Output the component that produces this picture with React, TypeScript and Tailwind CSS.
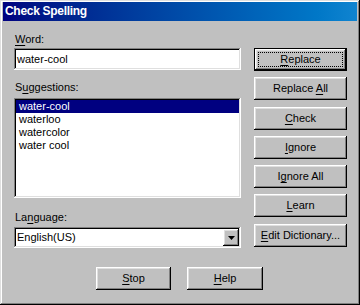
import React from 'react';

const raised =
  'shadow-[inset_-1px_-1px_#000,inset_1px_1px_#fff,inset_-2px_-2px_#808080,inset_2px_2px_#dfdfdf]';
const sunken =
  'shadow-[inset_-1px_-1px_#fff,inset_1px_1px_#808080,inset_-2px_-2px_#dfdfdf,inset_2px_2px_#000]';

function Key({ children }: { children: React.ReactNode }) {
  return <span className="underline decoration-1 underline-offset-[2px]">{children}</span>;
}

function Button({
  children,
  className = '',
  isDefault = false,
}: {
  children: React.ReactNode;
  className?: string;
  isDefault?: boolean;
}) {
  if (isDefault) {
    return (
      <div className={`h-[23px] border border-black bg-[#c0c0c0] ${className}`}>
        <div className={`h-full w-full p-[3px] ${raised}`}>
          <div className="h-full w-full border border-dotted border-black flex items-center justify-center text-black">
            {children}
          </div>
        </div>
      </div>
    );
  }
  return (
    <div className={`h-[23px] bg-[#c0c0c0] flex items-center justify-center text-black ${raised} ${className}`}>
      {children}
    </div>
  );
}

const suggestions = ['water-cool', 'waterloo', 'watercolor', 'water cool'];

export default function App() {
  return (
    <div
      className={`w-[360px] h-[305px] bg-[#c0c0c0] pt-[2px] px-[3px] flex flex-col font-['Liberation_Sans',Arial,sans-serif] text-[11px] leading-[13px] text-black shadow-[inset_-1px_-1px_#000,inset_1px_1px_#dfdfdf,inset_-2px_-2px_#808080,inset_2px_2px_#fff]`}
    >
      {/* Title bar */}
      <div className="h-[19px] bg-linear-to-r from-[#000080] to-[#1084d0] flex items-center pl-[2px]">
        <span className="text-white font-bold text-[12px] tracking-[-0.3px]">Check Spelling</span>
      </div>

      <div className="flex pl-[11px] pt-[12px]">
        {/* Left column */}
        <div className="w-[227px] flex flex-col">
          <div className="h-[13px] pl-[1px]">
            <Key>W</Key>ord:
          </div>
          <div className={`mt-[2px] h-[22px] bg-white flex items-center pl-[3px] ${sunken}`}>water-cool</div>

          <div className="mt-[11px] h-[13px] pl-[1px]">
            S<Key>u</Key>ggestions:
          </div>
          <div className={`mt-[4px] h-[100px] bg-white p-[2px] ${sunken}`}>
            {suggestions.map((s, i) => (
              <div
                key={s}
                className={`h-[13px] pl-[3px] ${i === 0 ? 'bg-[#000080] text-white' : 'text-black'}`}
              >
                {s}
              </div>
            ))}
          </div>

          <div className="mt-[13px] h-[13px] pl-[1px]">
            La<Key>n</Key>guage:
          </div>
          <div className={`mt-[3px] h-[21px] bg-white flex items-center p-[2px] ${sunken}`}>
            <span className="flex-1 pl-[1px]">English(US)</span>
            <div className={`w-[16px] h-full bg-[#c0c0c0] flex items-center justify-center ${raised}`}>
              <svg width="7" height="4" viewBox="0 0 7 4">
                <path d="M0 0h7L3.5 4z" fill="#000" />
              </svg>
            </div>
          </div>
        </div>

        {/* Right column of buttons */}
        <div className="ml-[13px] w-[93px] mt-[15px] flex flex-col">
          <Button isDefault>
            <span>
              <Key>R</Key>eplace
            </span>
          </Button>
          <Button className="mt-[6px]">
            <span>
              Replace <Key>A</Key>ll
            </span>
          </Button>
          <Button className="mt-[7px]">
            <span>
              <Key>C</Key>heck
            </span>
          </Button>
          <Button className="mt-[6px]">
            <span>
              <Key>I</Key>gnore
            </span>
          </Button>
          <Button className="mt-[6px]">
            <span>
              I<Key>g</Key>nore All
            </span>
          </Button>
          <Button className="mt-[6px]">
            <span>
              <Key>L</Key>earn
            </span>
          </Button>
          <Button className="mt-[7px]">
            <span>
              <Key>E</Key>dit Dictionary...
            </span>
          </Button>
        </div>
      </div>

      {/* Bottom buttons */}
      <div className="mt-[19px] flex justify-center gap-[16px] pr-[1px]">
        <Button className="w-[75px]">
          <span>
            <Key>S</Key>top
          </span>
        </Button>
        <Button className="w-[76px]">
          <span>
            <Key>H</Key>elp
          </span>
        </Button>
      </div>
    </div>
  );
}
